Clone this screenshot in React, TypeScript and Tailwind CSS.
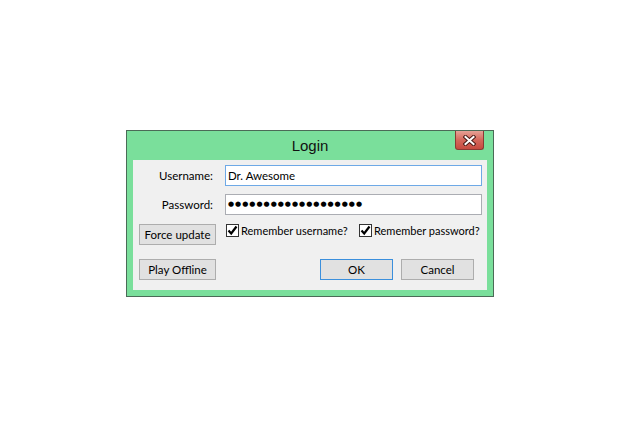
import React from 'react';

function CloseButton() {
  return (
    <div className="absolute top-0 right-[9px] w-[29px] h-[19px] border border-t-0 border-[#8a3a33] rounded-b-[3px] bg-gradient-to-b from-[#e5a196] via-[#d4675b] to-[#c74a3f] flex items-center justify-center">
      <svg width="13" height="11" viewBox="0 0 13 11">
        <path d="M2.5 2 L10.5 9 M10.5 2 L2.5 9" stroke="#4a1a16" strokeWidth="4" strokeLinecap="square" />
        <path d="M2.5 2 L10.5 9 M10.5 2 L2.5 9" stroke="#ffffff" strokeWidth="2" strokeLinecap="square" />
      </svg>
    </div>
  );
}

function Checkbox({ label, className }: { label: string; className?: string }) {
  return (
    <div className={`flex items-start gap-[2px] shrink-0 whitespace-nowrap ${className ?? ''}`}>
      <div className="w-[13px] h-[13px] border border-[#333333] bg-white flex items-center justify-center shrink-0">
        <svg width="11" height="11" viewBox="0 0 11 11">
          <path d="M1.5 5.5 L4.2 8.5 L9.5 1.5" fill="none" stroke="#000" strokeWidth="2.2" />
        </svg>
      </div>
      <span className="leading-[13px] text-[11px] text-black">{label}</span>
    </div>
  );
}

function Button({ children, primary }: { children: React.ReactNode; primary?: boolean }) {
  return (
    <div
      className={`h-[21px] flex items-center justify-center border bg-[#e1e1e1] text-[11.5px] text-black whitespace-nowrap ${
        primary ? 'border-[#3b8fdc] w-[73px]' : 'border-[#adadad]'
      }`}
    >
      {children}
    </div>
  );
}

export default function App() {
  return (
    <div className="w-[620px] h-[430px] bg-white pt-[130px] pl-[126px] font-['Lato',sans-serif]">
      <div className="w-[368px] h-[167px] border border-[#4b6b57] bg-[#7adf9b] flex flex-col">
        <div className="relative h-[29px] flex items-center justify-center">
          <span className="text-[15px] text-[#111] font-['Liberation_Sans',sans-serif] mt-[1px]">Login</span>
          <CloseButton />
        </div>
        <div className="mx-[6px] h-[130px] bg-[#f0f0f0] pt-[5px] pl-[6px] pr-[5px] grid grid-cols-[77px_257px] gap-x-[9px] grid-rows-[21px_21px_21px_21px] gap-y-[8px]">
          <div className="flex items-center justify-end pr-[3px] text-[11.5px] text-black">Username:</div>
          <div className="border border-[#6ea9e6] bg-white flex items-center pl-[2px] text-[11.5px] text-black">Dr. Awesome</div>

          <div className="flex items-center justify-end pr-[3px] text-[11.5px] text-black">Password:</div>
          <div className="border border-[#abadb3] bg-white flex items-center pl-[2px]">
            <span className="font-['DejaVu_Sans',sans-serif] text-[7px] tracking-[1px] leading-none text-black">
              ●●●●●●●●●●●●●●●●●●●
            </span>
          </div>

          <div className="mt-[1px]">
            <Button>Force update</Button>
          </div>
          <div className="flex items-start mt-[1px] pl-[1px]">
            <Checkbox label="Remember username?" className="w-[133px]" />
            <Checkbox label="Remember password?" />
          </div>

          <div className="mt-[7px]">
            <Button>Play Offline</Button>
          </div>
          <div className="mt-[7px] flex justify-end gap-[8px] pr-[8px]">
            <Button primary>OK</Button>
            <div className="w-[73px]">
              <Button>Cancel</Button>
            </div>
          </div>
        </div>
      </div>
    </div>
  );
}
